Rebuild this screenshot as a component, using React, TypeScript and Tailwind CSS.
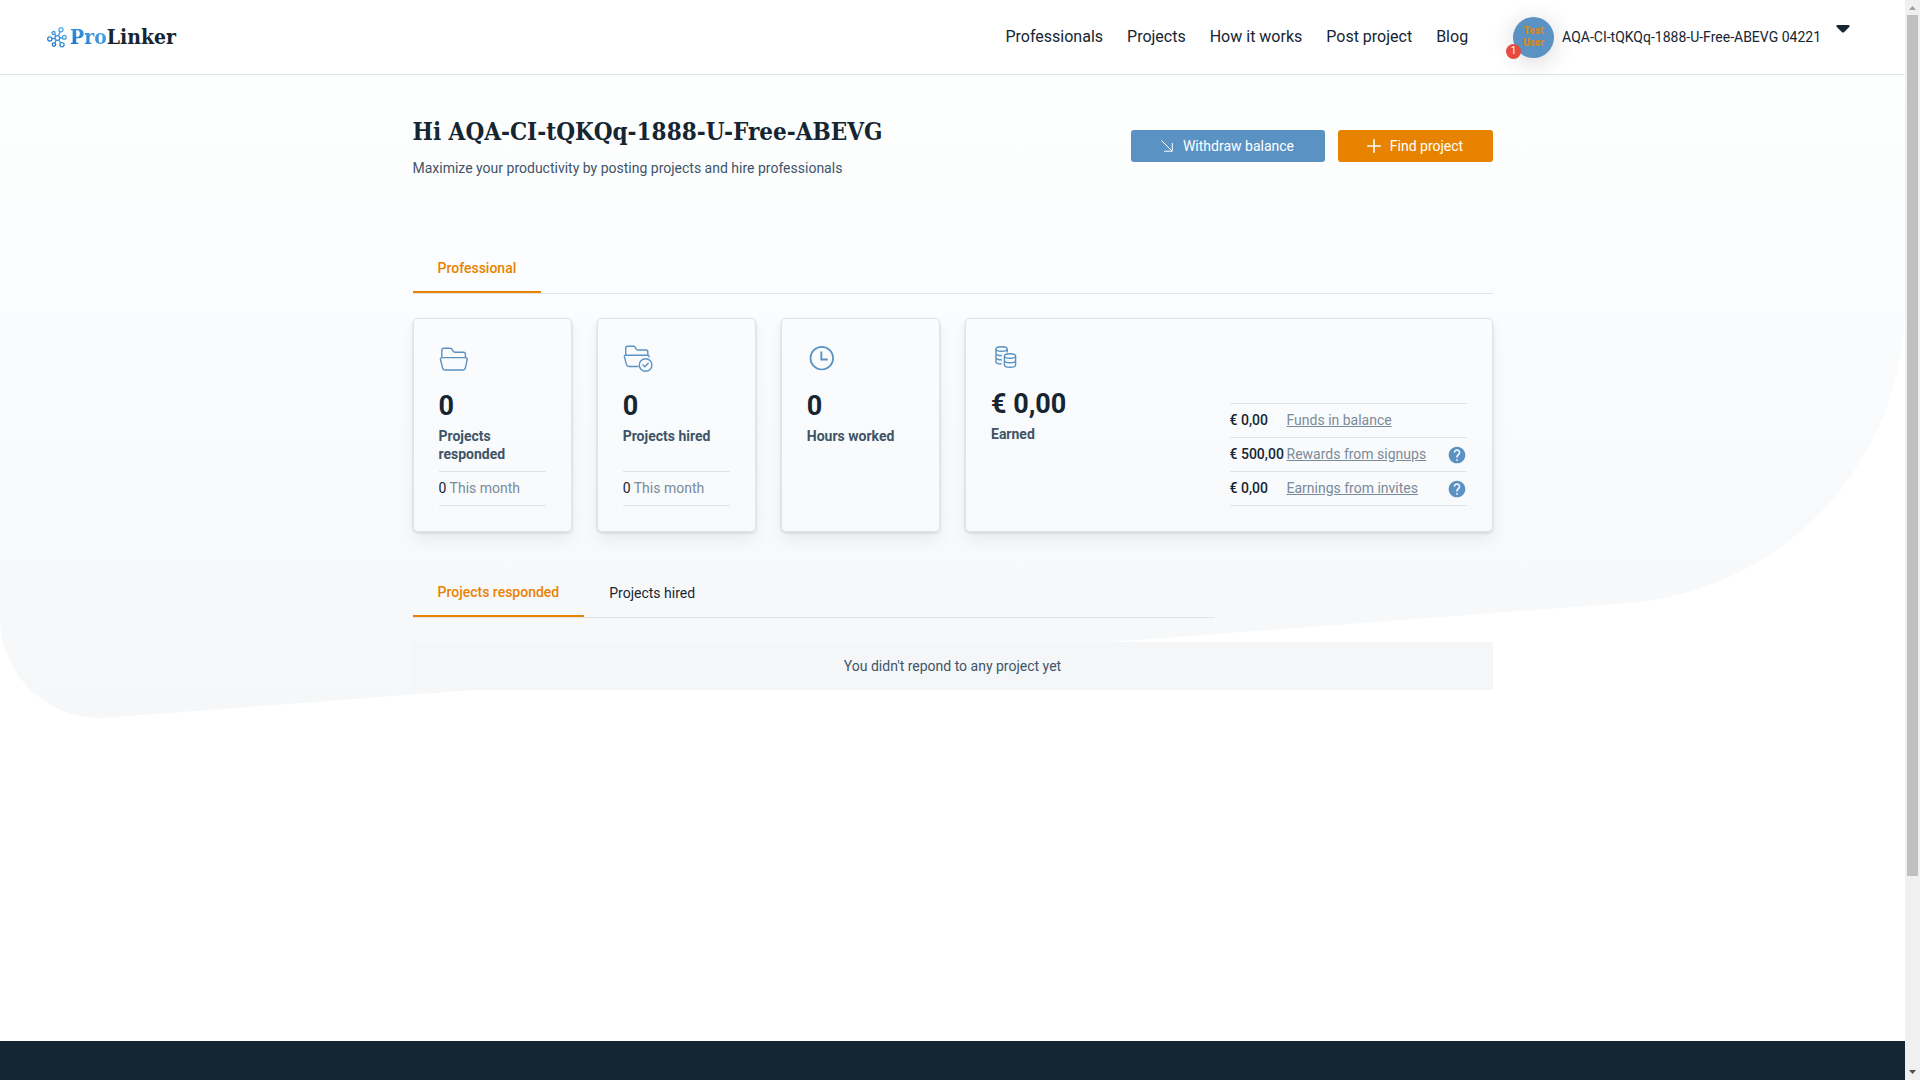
import type { ReactNode } from "react";

function LogoMark() {
  return (
    <svg width="20" height="21" viewBox="0 0 20 21" fill="none" stroke="url(#mark)" strokeWidth="1.3" aria-hidden="true">
      <defs>
        <linearGradient id="mark" x1="0" y1="20" x2="20" y2="0" gradientUnits="userSpaceOnUse">
          <stop stopColor="#1268c0" />
          <stop offset="1" stopColor="#5cb8f2" />
        </linearGradient>
      </defs>
      <circle cx="10.3" cy="11" r="2.4" />
      <circle cx="14" cy="2.8" r="2.1" />
      <circle cx="6.6" cy="6" r="1.5" />
      <circle cx="17.3" cy="10.3" r="1.9" />
      <circle cx="2.8" cy="12" r="2.1" />
      <circle cx="7" cy="17.6" r="1.7" />
      <circle cx="15" cy="17.8" r="2.1" />
      <path d="M11.3 8.8 13.1 4.7M7.5 7.2 9 9M12.7 11l2.7-.4M7.9 11.3l-3 .4M9.2 13.2 7.8 16M11.7 13l2.1 3" />
    </svg>
  );
}

function Folder() {
  return (
    <svg width="30" height="30" viewBox="0 0 30 30" fill="none" stroke="#5a92c4" strokeWidth="1.4" strokeLinejoin="round" aria-hidden="true">
      <path d="M2.8 14V6.2Q2.8 4.2 4.8 4.2h6.4q1 0 1.5.8l1.6 2.4q.5.8 1.5.8h8.6q2 0 2 2V14" />
      <path d="M3 13.6h23.6q1.9 0 1.6 1.9l-1.8 8.3q-.5 2.2-2.7 2.2H6Q4 26 3.6 23.8L1.5 15.5q-.4-1.9 1.5-1.9z" />
    </svg>
  );
}

function FolderCheck() {
  return (
    <svg width="30" height="30" viewBox="0 0 30 30" fill="none" stroke="#5a92c4" strokeWidth="1.4" strokeLinejoin="round" aria-hidden="true">
      <path d="M2.7 11V4.2q0-1.9 1.9-1.9h6q1 0 1.4.7l1.5 2.3q.5.7 1.4.7h8q1.9 0 1.9 1.9V11" />
      <path d="M15.5 22.5H6q-2.1 0-2.6-2.1L1.4 12.9q-.4-1.7 1.4-1.7h22q1.6 0 1.2 2.3" />
      <circle cx="22.6" cy="21" r="6.3" />
      <path d="m20 21 1.9 1.8 3.3-3.5" strokeLinecap="round" />
    </svg>
  );
}

function Clock() {
  return (
    <svg width="30" height="30" viewBox="0 0 30 30" fill="none" stroke="#5a92c4" aria-hidden="true">
      <circle cx="14.8" cy="14.2" r="11.3" strokeWidth="1.7" />
      <path d="M14.3 7.5v8h6.5" strokeWidth="1.8" />
    </svg>
  );
}

function Coins() {
  return (
    <svg width="30" height="28" viewBox="0 0 30 28" fill="none" stroke="#5a92c4" strokeWidth="1.4" aria-hidden="true">
      <ellipse cx="10.6" cy="5" rx="5.6" ry="2.2" />
      <path d="M5 5v13q0 1.8 5.6 2M16.2 5v3.5M5 9.400q0 2.100 6 2.200M5 13.700q0 2.100 6 2.200" />
      <ellipse cx="19" cy="12" rx="5.6" ry="2.2" />
      <path d="M13.4 12v9q0 2.200 5.600 2.200t5.600-2.200v-9M13.400 16.500q0 2.200 5.600 2.200t5.600-2.200" />
    </svg>
  );
}

function HelpButton({ label }: { label: string }) {
  return (
    <button type="button" aria-label={label} className="ml-auto">
      <svg width="20" height="20" viewBox="0 0 24 24" fill="#5a92c4" aria-hidden="true">
        <path d="M12 2C6.480 2 2 6.480 2 12s4.480 10 10 10 10-4.480 10-10S17.520 2 12 2zm1 17h-2v-2h2v2zm2.070-7.750l-.9.920C13.450 12.900 13 13.500 13 15h-2v-.5c0-1.100.45-2.100 1.170-2.830l1.240-1.260c.370-.360.590-.860.590-1.410 0-1.100-.9-2-2-2s-2 .9-2 2H8c0-2.210 1.790-4 4-4s4 1.790 4 4c0 .880-.360 1.680-.930 2.250z" />
      </svg>
    </button>
  );
}

function StatCard({ icon, label, month }: { icon: ReactNode; label: string; month?: string }) {
  return (
    <article className="flex flex-col rounded-[5px] border border-[#e0e4e7] px-[25px] py-[25px] shadow-[0_8px_16px_rgba(0,0,0,0.06),0_1px_3px_rgba(0,0,0,0.14)]">
      {icon}
      <p className="mt-4 text-[27px] leading-8 font-bold text-[#152532]">0</p>
      <h2 className="mt-[5px] text-[14px] leading-[18px] font-bold text-[#3f5468]">{label}</h2>
      {month && (
        <p className="mt-auto border-y border-[#e0e4e7] py-[7px] text-[14px] leading-[19px] text-[#7a8b9a]">
          <span className="text-[#152532]">{month}</span> This month
        </p>
      )}
    </article>
  );
}

const earnings = [
  { amount: "€ 0,00", label: "Funds in balance", help: false },
  { amount: "€ 500,00", label: "Rewards from signups", help: true },
  { amount: "€ 0,00", label: "Earnings from invites", help: true },
];

const nav = ["Professionals", "Projects", "How it works", "Post project", "Blog"];

export default function App() {
  return (
    <div className="flex min-h-screen bg-white font-['Roboto',sans-serif] text-[#152532]">
      <div className="flex min-w-0 flex-1 flex-col">
        <header className="relative z-10 flex h-[75px] items-center border-b border-[#e0e6e8] bg-white pr-[55px] pl-[47px]">
          <a href="#" className="flex items-center gap-[3px]" aria-label="ProLinker">
            <LogoMark />
            <span className="font-['Roboto_Slab','DejaVu_Serif_Condensed','DejaVu_Serif',serif] text-[21px] leading-8 font-bold">
              <span className="bg-linear-to-tr from-[#1268c0] to-[#5cb8f2] bg-clip-text text-transparent">Pro</span>Linker
            </span>
          </a>
          <nav className="ml-auto flex gap-6 text-[16px]">
            {nav.map((n) => (
              <a key={n} href="#">{n}</a>
            ))}
          </nav>
          <button type="button" className="ml-[45px] flex items-center text-left text-[14px]">
            <span className="relative flex size-[41px] flex-col items-center justify-center rounded-full bg-[#5a92c4] text-[10px] leading-3 font-black text-[#d9861a] shadow-[0_4px_24px_rgba(0,0,0,0.16)]">
              <span>Test</span>
              <span>User</span>
              <span className="absolute -bottom-px -left-[7px] flex size-[15px] items-center justify-center rounded-full bg-[#e84a40] text-[10px] font-normal text-white">1</span>
            </span>
            <span className="ml-2">AQA-CI-tQKQq-1888-U-Free-ABEVG 04221</span>
            <svg width="14" height="8" viewBox="0 0 14 8" className="mb-4 ml-[15px]" aria-hidden="true">
              <path d="M1.500 0h11q2 .5.700 2L8 7.200q-1 .8-2 0L.8 2Q-.5.500 1.500 0z" fill="#152532" />
            </svg>
          </button>
        </header>

        <main className="relative flex-1">
          <svg className="absolute inset-x-0 top-0 h-[643px] w-full" viewBox="0 0 1905 643" preserveAspectRatio="none" aria-hidden="true">
            <defs>
              <linearGradient id="hero" x1="0" y1="0" x2="0" y2="1">
                <stop stopColor="#fdfffe" />
                <stop offset="0.35" stopColor="#fbfcfe" />
                <stop offset="1" stopColor="#f5f7f9" />
              </linearGradient>
            </defs>
            <path d="M0 0H1905V229A300 300 0 0 1 1627 528L108 642.600A100 100 0 0 1 0 543Z" fill="url(#hero)" />
          </svg>

          <div className="relative mx-auto max-w-[1080px]">
            <div className="flex items-start justify-between pt-[39px]">
              <div>
                <h1 className="font-['Roboto_Slab','DejaVu_Serif_Condensed','DejaVu_Serif',serif] text-[24px] leading-9 font-bold">Hi AQA-CI-tQKQq-1888-U-Free-ABEVG</h1>
                <p className="mt-2 text-[14px] leading-5 text-[#3f5468]">Maximize your productivity by posting projects and hire professionals</p>
              </div>
              <div className="mt-4 flex gap-[13px] text-[14px] text-white">
                <button type="button" className="flex h-8 w-[194px] items-center justify-center gap-[10px] rounded-[3px] bg-[#5a92c4]">
                  <svg width="12" height="12" viewBox="0 0 12 12" fill="none" stroke="#ffffff" aria-hidden="true">
                    <path d="M.5.500 11 11M3 11.200h8.300V3" />
                  </svg>
                  Withdraw balance
                </button>
                <button type="button" className="flex h-8 w-[155px] items-center justify-center gap-[9px] rounded-[3px] bg-[#e88300]">
                  <svg width="14" height="14" viewBox="0 0 14 14" stroke="#ffffff" strokeWidth="1.600" strokeLinecap="round" aria-hidden="true">
                    <path d="M7 .8v12.400M.8 7h12.400" />
                  </svg>
                  Find project
                </button>
              </div>
            </div>

            <div className="mt-[66px] flex border-b border-[#e0e4e7]" role="tablist">
              <button type="button" role="tab" aria-selected="true" className="h-[49px] border-b-2 border-[#e88300] px-[25px] pt-[2px] text-[14px] font-medium text-[#e88300]">Professional</button>
            </div>

            <section className="mt-6 grid min-h-[214px] grid-cols-6 gap-[25px]">
              <StatCard icon={<Folder />} label="Projects responded" month="0" />
              <StatCard icon={<FolderCheck />} label="Projects hired" month="0" />
              <StatCard icon={<Clock />} label="Hours worked" />
              <article className="col-span-3 flex justify-between rounded-[5px] border border-[#e0e4e7] px-[25px] py-[25px] shadow-[0_8px_16px_rgba(0,0,0,0.06),0_1px_3px_rgba(0,0,0,0.14)]">
                <div>
                  <Coins />
                  <p className="mt-4 text-[27px] leading-8 font-bold">€ 0,00</p>
                  <h2 className="mt-[5px] text-[14px] leading-[18px] font-bold text-[#3f5468]">Earned</h2>
                </div>
                <ul className="w-[237px] self-end border-t border-[#e0e4e7] text-[14px]">
                  {earnings.map((e) => (
                    <li key={e.label} className="flex h-[34px] items-center border-b border-[#e0e4e7]">
                      <span className="w-[57px] font-medium whitespace-nowrap">{e.amount}</span>
                      <a href="#" className="text-[#7a8b9a] underline">{e.label}</a>
                      {e.help && <HelpButton label={`About ${e.label}`} />}
                    </li>
                  ))}
                </ul>
              </article>
            </section>

            <div className="mt-9 mr-[278px] flex border-b border-[#e0e4e7] text-[14px]" role="tablist">
              <button type="button" role="tab" aria-selected="true" className="h-[49px] border-b-2 border-[#e88300] px-[25px] pt-[2px] font-medium text-[#e88300]">Projects responded</button>
              <button type="button" role="tab" aria-selected="false" className="h-[49px] px-[25px] pt-[2px]">Projects hired</button>
            </div>
            <p className="mt-6 bg-[#f5f6f8] py-[14px] text-center text-[14px] leading-5 text-[#3f5468]">You didn't repond to any project yet</p>
          </div>
        </main>

        <footer className="h-[39px] bg-[#152532]" />
      </div>

      <aside className="flex w-[15px] flex-col bg-[#f0f0f0]" aria-hidden="true">
        <svg width="15" height="15" viewBox="0 0 15 15"><path d="M4 10 7.500 6 11 10z" fill="#a0a0a0" /></svg>
        <div className="flex-1 px-[2px]">
          <div className="h-[82%] bg-[#c0c0c0]" />
        </div>
        <svg width="15" height="15" viewBox="0 0 15 15"><path d="M4 5h7L7.500 9z" fill="#505050" /></svg>
      </aside>
    </div>
  );
}
